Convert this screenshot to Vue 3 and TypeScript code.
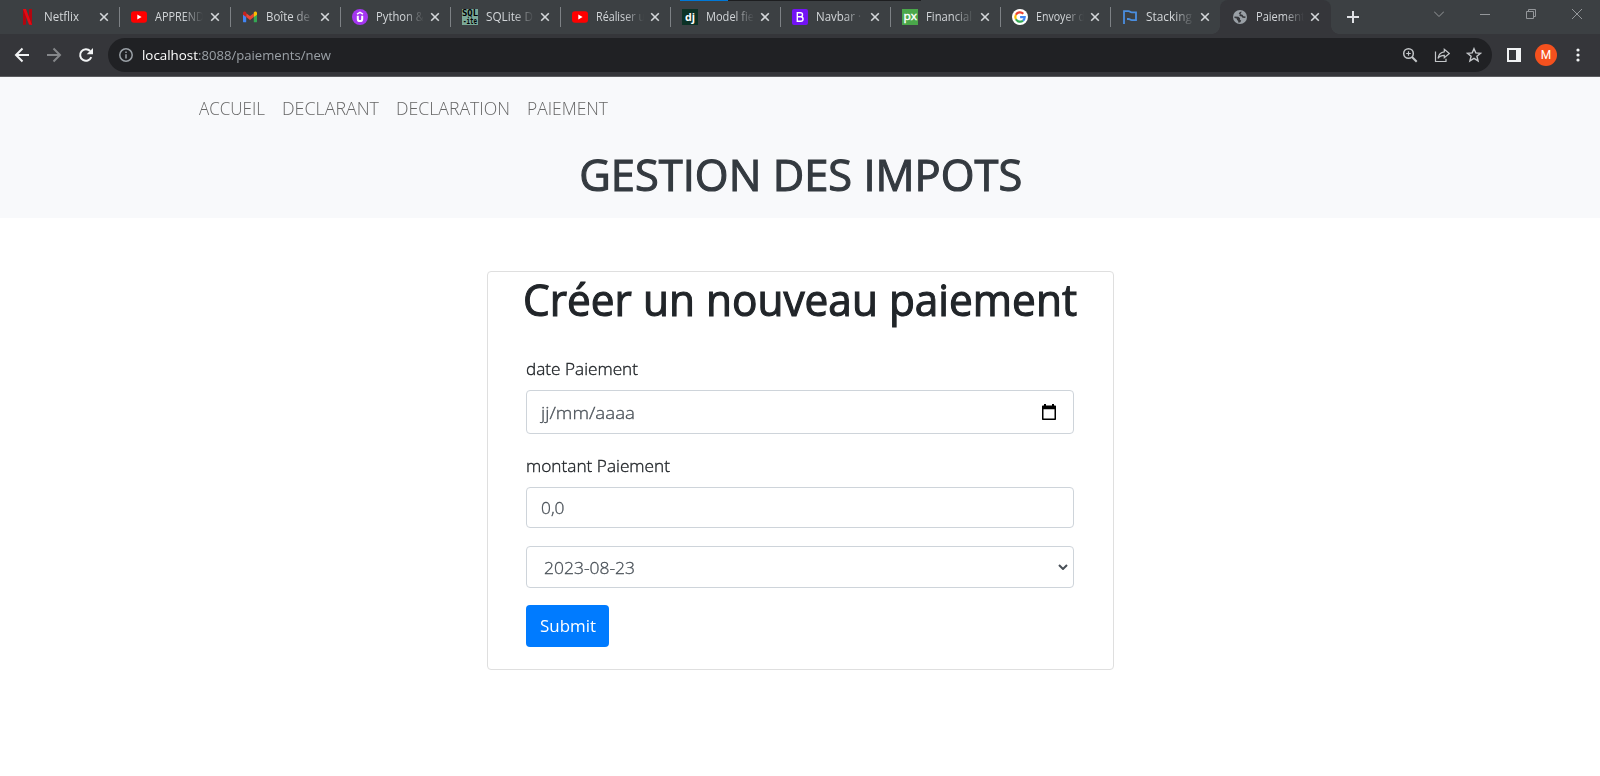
<script setup lang="ts">
import type { Directive } from 'vue'

interface Tab {
  title: string
  icon: string
  width: number
  active?: boolean
}

const tabs: Tab[] = [
  { title: 'Netflix', icon: 'netflix', width: 35 },
  { title: 'APPREND', icon: 'youtube', width: 49 },
  { title: 'Boîte de', icon: 'gmail', width: 44 },
  { title: 'Python &', icon: 'udemy', width: 48 },
  { title: 'SQLite D', icon: 'sqlite', width: 47 },
  { title: 'Réaliser u', icon: 'youtube', width: 49 },
  { title: 'Model fie', icon: 'django', width: 48 },
  { title: 'Navbar ·', icon: 'bootstrap', width: 45 },
  { title: 'Financial', icon: 'px', width: 46 },
  { title: 'Envoyer d', icon: 'google', width: 49 },
  { title: 'Stacking', icon: 'flag', width: 46 },
  { title: 'Paiement', icon: 'globe', width: 49, active: true },
]

const links = [
  { label: 'ACCUEIL', width: 66 },
  { label: 'DECLARANT', width: 97 },
  { label: 'DECLARATION', width: 114 },
  { label: 'PAIEMENT', width: 81 },
]

// Condenses or widens a line of text so that it spans the given width.
const vFit: Directive<HTMLElement, number> = {
  mounted(el, { value }) {
    const natural = el.getBoundingClientRect().width
    el.style.width = `${value}px`
    el.style.transform = `scaleX(${value / natural})`
  },
}
</script>

<template>
  <div class="window">
    <div class="tabstrip">
      <i class="edge-blue"></i><i class="edge-dark"></i>
      <div v-for="(tab, i) in tabs" :key="i" class="tab" :class="{ active: tab.active, wide: i === 1, plain: i === 0, last: i === tabs.length - 2 }">
        <svg class="favicon" viewBox="0 0 16 16">
          <template v-if="tab.icon === 'netflix'">
            <path fill="#b1060f" d="M2 0h3v15.500l-3 .5zM8 0h3v16l-3-.5z" />
            <path fill="#e50914" d="M2 0h3L11 16l-3-.5z" />
          </template>
          <template v-else-if="tab.icon === 'youtube'">
            <rect y="2.300" width="16" height="11.400" rx="3" fill="#f00" />
            <path fill="#fff" d="M6.300 5.600v4.800L10.600 8z" />
          </template>
          <template v-else-if="tab.icon === 'gmail'">
            <path fill="#4285f4" d="M1 4v8.400c0 .5.4.9.9.9h2.300V6z" />
            <path fill="#34a853" d="M15 4v8.400c0 .5-.4.9-.9.9h-2.300V6z" />
            <path fill="#ea4335" d="M4.200 4.200 8 7l3.800-2.800v3.900L8 11 4.200 8.100z" />
            <path fill="#c5221f" d="M1 4.100C1 2.600 2.600 2.100 3.700 2.900l.5.4v4.800L1 5.700z" />
            <path fill="#fbbc04" d="M15 4.100c0-1.500-1.600-2-2.700-1.200l-.5.4v4.800L15 5.700z" />
          </template>
          <template v-else-if="tab.icon === 'udemy'">
            <circle cx="8" cy="8" r="8" fill="#a435f0" />
            <path fill="none" stroke="#fff" stroke-width="2" d="M5.800 6.800v3.100a2.200 2.200 0 0 0 4.400 0V6.800" />
            <path fill="none" stroke="#fff" stroke-width="1.400" d="M5 5.100 8 3.300l3 1.800" />
          </template>
          <template v-else-if="tab.icon === 'sqlite'">
            <rect width="16" height="16" fill="#7aa898" />
            <text x="0" y="7" textLength="16" lengthAdjust="spacingAndGlyphs" class="pixel">SQL</text>
            <text x="1" y="15" textLength="14" lengthAdjust="spacingAndGlyphs" class="pixel">-ite</text>
          </template>
          <template v-else-if="tab.icon === 'django'">
            <rect width="16" height="16" fill="#0c3226" />
            <text x="3" y="11.800" textLength="10" lengthAdjust="spacingAndGlyphs" class="mark">dj</text>
          </template>
          <template v-else-if="tab.icon === 'bootstrap'">
            <rect width="16" height="16" rx="2" fill="#7312f5" />
            <path fill="none" stroke="#fff" stroke-width="1.400" d="M5.300 3.700h3.200c2.700 0 2.700 4 0 4H5.300zm0 4h3.500c3 0 3 4.600 0 4.600H5.300z" />
          </template>
          <template v-else-if="tab.icon === 'px'">
            <rect width="16" height="16" fill="#4aa74a" />
            <text x="1.500" y="11.300" textLength="13.500" lengthAdjust="spacingAndGlyphs" class="mark thin">px</text>
          </template>
          <template v-else-if="tab.icon === 'google'">
            <circle cx="8" cy="8" r="8" fill="#fff" />
            <g fill="none" stroke-width="2.200">
              <path stroke="#ea4335" d="M3.900 5.700A4.700 4.700 0 0 1 11.300 4.700" />
              <path stroke="#fbbc05" d="M3.900 5.700a4.700 4.700 0 0 0 0 4.600" />
              <path stroke="#34a853" d="M3.900 10.300a4.700 4.700 0 0 0 7.100 1.300" />
              <path stroke="#4285f4" d="M11 11.600A4.700 4.700 0 0 0 12.700 8.200H8.100" />
            </g>
          </template>
          <template v-else-if="tab.icon === 'flag'">
            <path fill="none" stroke="#4a8ee0" stroke-width="1.800" d="M2 15V2.200h4.500c1.500 0 1.700 1.200 3.200 1.200H14v7.800H9.700c-1.500 0-1.700-1.200-3.200-1.200H5" />
          </template>
          <template v-else>
            <circle cx="8" cy="8" r="7" fill="#9aa0a6" />
            <path fill="#35363a" d="M8.300 2.700 6.700 4.300l1.100 1.300-.4 1.500 2.300.3.800 1.400 2.800.3.300-1.600-2.200-.3-.9-1.500-2-.5.400-1.200 1-1.200zM2.500 7.600l3.900.2 1.700 1.400-.2 1.500 1.300.8-.8 1.800-1.900.4-.5-1.900-1-.9-.3-1.400-2.300-.6z" />
          </template>
        </svg>
        <div class="tab-title"><span v-fit="tab.width" class="fit">{{ tab.title }}</span></div>
        <svg class="tab-close" viewBox="0 0 10 10"><path d="m1.200 1.200 7.600 7.600m0-7.600L1.200 8.800" /></svg>
      </div>
      <svg class="new-tab" viewBox="0 0 12 12"><path d="M6 0v12M0 6h12" /></svg>
      <div class="controls">
        <svg viewBox="0 0 10 10"><path d="m0 2.500 5 5 5-5" /></svg>
        <svg viewBox="0 0 10 10"><path d="M0 5.500h10" /></svg>
        <svg viewBox="0 0 10 10"><path d="M.5 2.500h7v7h-7zM2.500 2.500v-2h7v7h-2" /></svg>
        <svg viewBox="0 0 10 10"><path d="m0 0 10 10M10 0 0 10" /></svg>
      </div>
    </div>

    <div class="toolbar">
      <svg class="nav-icon" viewBox="0 0 16 16"><path d="M15 8H2m6.500-6.500L2 8l6.500 6.500" /></svg>
      <svg class="nav-icon dim" viewBox="0 0 16 16"><path d="M1 8h13M7.500 1.500 14 8l-6.500 6.500" /></svg>
      <svg class="nav-icon" viewBox="0 0 16 16">
        <path d="M13.300 10.200A5.800 5.800 0 1 1 12.200 4" /><path class="solid" d="M15 1v6.300H8.700z" />
      </svg>
      <div class="omnibox">
        <svg class="info" viewBox="0 0 14 14">
          <circle cx="7" cy="7" r="6.200" /><path d="M7 6.200v4.300M7 3.500v1.500" />
        </svg>
        <div class="url"><span v-fit="56" class="fit host">localhost</span><span v-fit="133" class="fit">:8088/paiements/new</span></div>
        <svg class="box-icon" viewBox="0 0 16 16">
          <circle cx="6.500" cy="6.500" r="4.800" /><path d="m10 10 4.700 4.700" stroke-width="2" /><path d="M4.200 6.500h4.600M6.500 4.200v4.600" stroke-width="1.200" />
        </svg>
        <svg class="box-icon" viewBox="0 0 16 16">
          <path d="M1.500 4.500v10H12v-2.800" stroke-width="1.200" /><path d="M10.300 2.300v2.500C6.600 5.200 4.600 7.500 4 11.300 5.600 9 7.600 8.300 10.300 8.300v2.500l5-4.300z" stroke-width="1.200" />
        </svg>
        <svg class="box-icon" viewBox="0 0 16 16">
          <path d="m8 1.700 1.800 4.200 4.700.4-3.600 3 1.200 4.600L8 11.400l-4.100 2.500 1.200-4.600-3.600-3 4.700-.4z" stroke-width="1.400" />
        </svg>
      </div>
      <svg class="panel" viewBox="0 0 14 14"><path fill="#f1f3f4" fill-rule="evenodd" d="M0 0h14v14H0zM2 2v10h7V2z" /></svg>
      <div class="avatar">M</div>
      <svg class="kebab" viewBox="0 0 4 14"><circle cx="2" cy="2" r="1.600" /><circle cx="2" cy="7" r="1.600" /><circle cx="2" cy="12" r="1.600" /></svg>
    </div>

    <header class="site-header">
      <nav>
        <a v-for="link in links" :key="link.label"><span v-fit="link.width" class="fit">{{ link.label }}</span></a>
      </nav>
      <h1><span v-fit="443" class="fit">GESTION DES IMPOTS</span></h1>
    </header>

    <main>
      <form class="card" @submit.prevent>
        <h2><span v-fit="554" class="fit">Créer un nouveau paiement</span></h2>
        <label class="label"><span v-fit="112" class="fit">date Paiement</span></label>
        <div class="control date">
          <span v-fit="94" class="fit">jj/mm/aaaa</span>
          <svg viewBox="0 0 14 16"><path fill="#000" fill-rule="evenodd" d="M2 0h2v1.500h6V0h2v1.500h1c.6 0 1 .4 1 1V15c0 .6-.4 1-1 1H1c-.6 0-1-.4-1-1V2.500c0-.6.400-1 1-1h1zM1.500 5.200v9.300h11V5.200z" /></svg>
        </div>
        <label class="label second"><span v-fit="144" class="fit">montant Paiement</span></label>
        <div class="control amount"><span v-fit="23.5" class="fit">0,0</span></div>
        <div class="control select">
          <span v-fit="91" class="fit">2023-08-23</span>
          <svg viewBox="0 0 10 6"><path d="m1 1 4 4 4-4" /></svg>
        </div>
        <button type="submit"><span v-fit="56" class="fit">Submit</span></button>
      </form>
    </main>
  </div>
</template>

<style>
body {
  margin: 0;
  overflow: hidden;
}
</style>

<style scoped>
.window {
  width: 1600px;
  height: 776px;
  background: #fff;
  color: #212529;
  font-family: 'Segoe UI', 'Open Sans', 'Noto Sans', sans-serif;
}
.fit {
  display: inline-block;
  white-space: nowrap;
  transform-origin: 0 50%;
}
svg {
  display: block;
  flex: none;
  fill: none;
}

/* Browser tabs */
.tabstrip {
  position: relative;
  display: flex;
  height: 34px;
  box-sizing: border-box;
  padding-left: 9px;
  background: #3c4043;
}
.edge-blue,
.edge-dark {
  position: absolute;
  top: 0;
  left: 680px;
  width: 48px;
  height: 1px;
  background: #0078d7;
}
.edge-dark {
  left: 728px;
  width: 193px;
  background: #1d1e20;
}
.tab {
  position: relative;
  display: flex;
  align-items: center;
  width: 110px;
  height: 34px;
  box-sizing: border-box;
  padding: 0 10px 0 12px;
  color: #d3d6d9;
  font-size: 12px;
}
.tab.wide {
  width: 111px;
}
.tab::after {
  content: '';
  position: absolute;
  right: -1px;
  top: 7px;
  width: 1px;
  height: 20px;
  background: #7d8185;
}
.tab.last::after {
  display: none;
}
.tab.active {
  width: 111px;
  background: #35363a;
  border-radius: 8px 8px 0 0;
}
.tab.active::before,
.tab.active::after {
  content: '';
  position: absolute;
  top: auto;
  bottom: 0;
  left: -8px;
  width: 8px;
  height: 8px;
  background: radial-gradient(circle at 0 0, transparent 7.500px, #35363a 8px);
}
.tab.active::after {
  right: -8px;
  left: auto;
  background: radial-gradient(circle at 100% 0, transparent 7.500px, #35363a 8px);
}
.favicon {
  width: 16px;
  height: 16px;
}
.pixel {
  font: bold 8px 'DejaVu Sans Mono', monospace;
  fill: #000;
}
.mark {
  font: bold 10.500px 'Open Sans', sans-serif;
  fill: #fff;
}
.mark.thin {
  font-size: 11.500px;
  font-weight: 400;
  stroke: #fff;
  stroke-width: 0.400;
}
.tab-title {
  width: 50px;
  margin-left: 8px;
  padding: 0 0 1px;
  line-height: 18px;
  -webkit-mask-image: linear-gradient(90deg, #000 28px, transparent 48px);
  mask-image: linear-gradient(90deg, #000 28px, transparent 48px);
}
.tab.plain .tab-title {
  margin: 0 1px 0 7px;
  -webkit-mask-image: none;
  mask-image: none;
}
.tab-close {
  width: 10px;
  height: 10px;
  margin-left: 4px;
  stroke: #d3d6d9;
  stroke-width: 1.600;
}
.tab.wide .tab-close {
  margin-left: 5px;
}
.new-tab {
  width: 12px;
  height: 12px;
  margin: 11px 0 0 16px;
  stroke: #dfe1e5;
  stroke-width: 2;
}
.controls {
  display: flex;
  gap: 36px;
  margin: 9px 18px 0 auto;
}
.controls svg {
  width: 10px;
  height: 10px;
  stroke: #94979a;
  stroke-width: 1;
}

/* Address bar */
.toolbar {
  display: flex;
  align-items: center;
  height: 43px;
  box-sizing: border-box;
  padding: 0 20px 1px 14px;
  background: #35363a;
  border-bottom: 1px solid #5b5c5f;
}
.nav-icon {
  width: 16px;
  height: 16px;
  margin-right: 16px;
  stroke: #f1f3f4;
  stroke-width: 2;
}
.nav-icon.dim {
  stroke: #85878a;
}
.nav-icon .solid {
  fill: #f1f3f4;
  stroke: none;
}
.omnibox {
  display: flex;
  align-items: center;
  width: 1384px;
  height: 34px;
  margin-left: -2px;
  box-sizing: border-box;
  padding: 0 10px 0 11px;
  border-radius: 17px;
  background: #202124;
}
.info {
  width: 14px;
  height: 14px;
  stroke: #9aa0a6;
  stroke-width: 1.500;
}
.url {
  display: flex;
  margin: 0 auto 0 9px;
  color: #9aa0a6;
  font-size: 13.500px;
  line-height: 20px;
}
.host {
  color: #fff;
}
.box-icon {
  width: 16px;
  height: 16px;
  margin-left: 16px;
  stroke: #c3c6c9;
  stroke-width: 1.500;
}
.panel {
  width: 14px;
  height: 14px;
  margin-left: 15px;
}
.avatar {
  width: 22px;
  height: 22px;
  margin-left: 14px;
  border-radius: 50%;
  background: #f4511e;
  color: #fff;
  font: 400 12px/22px Roboto, sans-serif;
  text-align: center;
}
.kebab {
  width: 4px;
  height: 14px;
  margin-left: 19px;
  fill: #f1f3f4;
}

/* Site header */
.site-header {
  height: 141px;
  background: #f8f9fb;
}
nav {
  display: flex;
  gap: 17px;
  padding: 19px 0 0 198.500px;
  color: #666;
  font-size: 17.600px;
  font-weight: 300;
  line-height: 24px;
}
h1,
h2 {
  margin: 0;
  font-size: 43px;
  font-weight: 400;
  line-height: 52px;
  -webkit-text-stroke: 1.100px currentColor;
}
h1 {
  padding: 29px 3px 0 0;
  color: #343a40;
  text-align: center;
}

/* Payment form */
.card {
  width: 627px;
  height: 399px;
  margin: 53px 0 0 487px;
  box-sizing: border-box;
  padding: 2px 39px 0 38px;
  border: 1px solid #dfdfdf;
  border-radius: 4px;
  font-size: 17px;
}
h2 {
  margin-left: -3px;
}
.label {
  display: block;
  height: 26px;
  margin-top: 30px;
  font-weight: 300;
  line-height: 26px;
  -webkit-text-stroke: 0.350px currentColor;
}
.label.second {
  margin-top: 19px;
}
.control {
  display: flex;
  align-items: center;
  justify-content: space-between;
  box-sizing: border-box;
  width: 548px;
  padding: 0 17px 0 14px;
  border: 1px solid #ced4da;
  border-radius: 4px;
  color: #495057;
  font-weight: 300;
  -webkit-text-stroke: 0.300px currentColor;
}
.date {
  height: 44px;
  margin-top: 8px;
  padding-top: 1px;
}
.date svg {
  width: 14px;
  height: 16px;
  margin-top: -2px;
}
.amount {
  height: 41px;
  margin-top: 8px;
}
.select {
  height: 42px;
  margin-top: 18px;
  padding: 0 5px 0 17px;
}
.select svg {
  width: 10px;
  height: 6px;
  stroke: #495057;
  stroke-width: 2;
}
button {
  display: block;
  width: 83px;
  height: 42px;
  margin-top: 17px;
  padding: 0 0 1px 14px;
  border: 0;
  border-radius: 4px;
  background: #007bff;
  color: #fff;
  font: inherit;
  text-align: left;
}
</style>
